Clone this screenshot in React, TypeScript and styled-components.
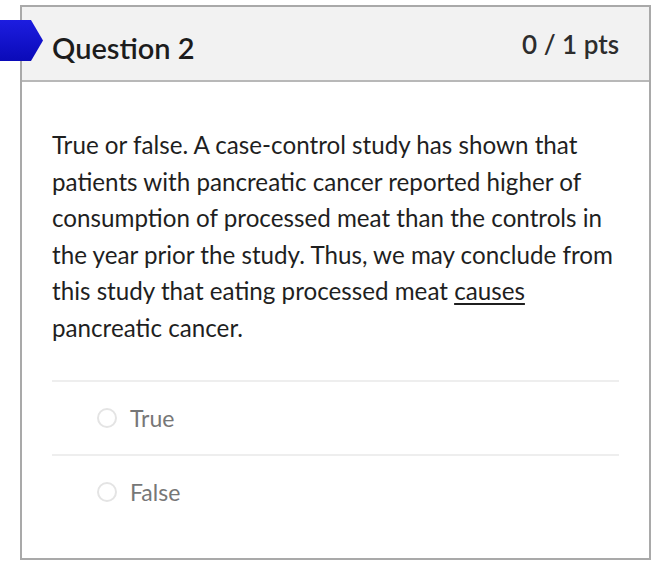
import React from "react";
import styled, { createGlobalStyle } from "styled-components";

const Global = createGlobalStyle`
  html, body { margin: 0; padding: 0; background: #ffffff; }
  body { font-family: Lato, "Open Sans", sans-serif; }
`;

const Page = styled.div`
  width: 655px;
  height: 565px;
  padding: 5px 5px 0 20px;
  box-sizing: border-box;
  position: relative;
`;

const Card = styled.div`
  width: 631px;
  height: 555px;
  box-sizing: border-box;
  border: 2px solid #a9a9a9;
  display: flex;
  flex-direction: column;
`;

const Header = styled.div`
  height: 75px;
  box-sizing: border-box;
  background: #f2f2f2;
  border-bottom: 2px solid #b8b8b8;
  display: flex;
  justify-content: space-between;
  padding: 0 30px 0 30px;
`;

const Title = styled.h2`
  margin: 0;
  font-size: 29px;
  font-weight: 600;
  color: #1c1c1c;
  padding-top: 24px;
  line-height: 34px;
`;

const Points = styled.div`
  font-size: 26px;
  font-weight: 600;
  color: #2d2d2d;
  padding-top: 21px;
  line-height: 32px;
`;

const Marker = styled.svg`
  position: absolute;
  left: 0;
  top: 20px;
`;

const Body = styled.div`
  padding: 45px 30px 0 30px;
`;

const Text = styled.p`
  margin: 0;
  font-size: 24.2px;
  line-height: 36.5px;
  color: #1f1f1f;
`;

const Underlined = styled.span`
  text-decoration: underline;
  text-decoration-thickness: 2px;
  text-underline-offset: 3px;
`;

const Answers = styled.div`
  margin: 34px 30px 0 30px;
`;

const Answer = styled.label`
  display: flex;
  align-items: center;
  gap: 13px;
  height: 72px;
  border-top: 2px solid #eeeeee;
  padding-left: 45px;
  font-size: 23px;
  color: #777777;
`;

const Radio = styled.span`
  width: 20px;
  height: 20px;
  border-radius: 50%;
  border: 2px solid #e4e4e4;
  box-sizing: border-box;
  display: inline-block;
`;

export default function App() {
  return (
    <>
      <Global />
      <Page>
        <Marker width="44" height="41" viewBox="0 0 44 41">
          <defs>
            <linearGradient id="g" x1="0" y1="0" x2="0" y2="1">
              <stop offset="0" stopColor="#1d1de0" />
              <stop offset="1" stopColor="#0a0ab8" />
            </linearGradient>
          </defs>
          <polygon points="0,0 31,0 43,20.5 31,41 0,41" fill="url(#g)" />
        </Marker>
        <Card>
          <Header>
            <Title>Question 2</Title>
            <Points>0 / 1 pts</Points>
          </Header>
          <Body>
            <Text>
              True or false. A case-control study has shown that patients with pancreatic cancer
              reported higher of consumption of processed meat than the controls in the year prior
              the study. Thus, we may conclude from this study that eating processed meat{" "}
              <Underlined>causes</Underlined> pancreatic cancer.
            </Text>
          </Body>
          <Answers>
            <Answer>
              <Radio />
              True
            </Answer>
            <Answer>
              <Radio />
              False
            </Answer>
          </Answers>
        </Card>
      </Page>
    </>
  );
}
